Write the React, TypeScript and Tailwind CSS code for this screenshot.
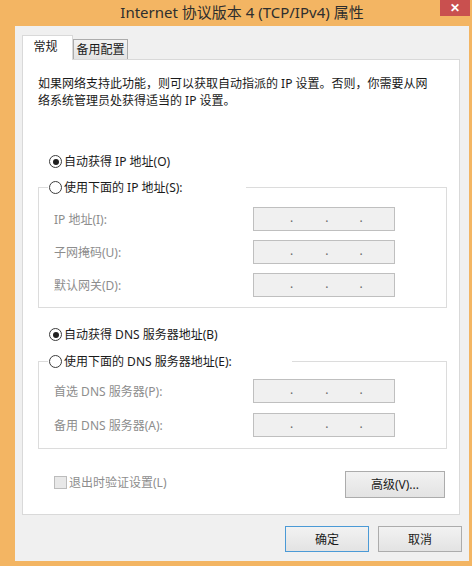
import React from "react";

const Radio = ({ checked }: { checked?: boolean }) => (
  <span className="w-[13px] h-[13px] rounded-full border border-[#3c3c3c] bg-white flex items-center justify-center shrink-0">
    {checked && <span className="w-[6px] h-[6px] rounded-full bg-[#1f1f1f]" />}
  </span>
);

const IpBox = () => (
  <div className="w-[142px] h-[24px] border border-[#bfbfbf] bg-[#f0f0f0] flex items-center text-[#6a6a6a] text-[12px] leading-none pb-[2px]">
    <span className="ml-[36px]">.</span>
    <span className="ml-[32px]">.</span>
    <span className="ml-[31px]">.</span>
  </div>
);

const Row = ({ label }: { label: string }) => (
  <div className="flex items-center">
    <div className="w-[214px] pl-[15px] text-[#8d8d8d]">{label}</div>
    <IpBox />
  </div>
);

const Btn = ({ children, def }: { children: React.ReactNode; def?: boolean }) => (
  <div
    className={
      "flex items-center justify-center bg-gradient-to-b from-[#f2f2f2] to-[#e3e3e3] border " +
      (def ? "border-[#4b9ad6]" : "border-[#acacac]")
    }
  >
    {children}
  </div>
);

export default function App() {
  return (
    <div className="w-[472px] h-[566px] bg-[#f3b563] flex flex-col pl-[15px] pr-[3px] pb-[5px] font-['Noto_Sans','Noto_Sans_CJK_SC',sans-serif] text-[12px] leading-[17px] text-[#1a1a1a]">
      <div className="h-[26px] relative flex items-center justify-center shrink-0">
        <span className="text-[15px] text-[#2e2e2e] pb-[2px]">Internet 协议版本 4 (TCP/IPv4) 属性</span>
        <div className="absolute right-[-1px] top-0 w-[30px] h-[16px] bg-[#c9504f] flex items-center justify-center text-white text-[12px] font-bold leading-none">
          ✕
        </div>
      </div>
      <div className="flex-1 bg-[#f0f0f0] flex flex-col pl-[7px] pt-[9px]">
        <div className="flex items-end h-[24px]">
          <div className="relative z-10 w-[51px] h-[25px] mb-[-1px] bg-white border border-b-0 border-[#d9d9d9] flex justify-center pt-[2px] pr-[4px]">
            常规
          </div>
          <div className="w-[55px] h-[20px] bg-gradient-to-b from-[#f2f2f2] to-[#e4e4e4] border border-b-0 border-[#acacac] flex justify-center items-center">
            备用配置
          </div>
        </div>
        <div className="w-[438px] h-[456px] bg-white border border-[#d9d9d9] pl-[15px] pt-[15px] flex flex-col">
          <p className="w-[400px]">
            如果网络支持此功能，则可以获取自动指派的 IP 设置。否则，你需要从网
            <br />
            络系统管理员处获得适当的 IP 设置。
          </p>
          <div className="mt-[44px] ml-[11px] flex items-center gap-[2px] h-[17px]">
            <Radio checked />
            <span>自动获得 IP 地址(O)</span>
          </div>
          <fieldset className="mt-[9px] w-[409px] border border-[#dcdcdc] px-0 pt-[11px] pb-[10px] flex flex-col gap-[9px]">
            <legend className="ml-[9px] pl-[1px] w-[198px] h-[17px] flex items-center gap-[2px] bg-white">
              <Radio />
              <span>使用下面的 IP 地址(S):</span>
            </legend>
            <Row label="IP 地址(I):" />
            <Row label="子网掩码(U):" />
            <Row label="默认网关(D):" />
          </fieldset>
          <div className="mt-[18px] ml-[11px] flex items-center gap-[2px] h-[17px]">
            <Radio checked />
            <span>自动获得 DNS 服务器地址(B)</span>
          </div>
          <fieldset className="mt-[10px] w-[409px] border border-[#dcdcdc] px-0 pt-[9px] pb-[11px] flex flex-col gap-[10px]">
            <legend className="ml-[9px] pl-[1px] w-[244px] h-[17px] flex items-center gap-[2px] bg-white">
              <Radio />
              <span>使用下面的 DNS 服务器地址(E):</span>
            </legend>
            <Row label="首选 DNS 服务器(P):" />
            <Row label="备用 DNS 服务器(A):" />
          </fieldset>
          <div className="mt-[22px] w-[409px] pl-[16px] pr-[2px] flex items-center justify-between">
            <div className="flex items-center gap-[2px] mb-[4px] text-[#8d8d8d]">
              <span className="w-[13px] h-[13px] border border-[#bcbcbc] bg-[#e8e8e8]" />
              <span>退出时验证设置(L)</span>
            </div>
            <div className="w-[100px] h-[27px] flex">
              <div className="flex-1 flex">
                <Btn>
                  <span className="w-[98px] text-center">高级(V)...</span>
                </Btn>
              </div>
            </div>
          </div>
        </div>
        <div className="mt-[11px] flex justify-end gap-[9px] pr-[7px]">
          <div className="w-[84px] h-[26px] flex">
            <Btn def>
              <span className="w-[82px] text-center">确定</span>
            </Btn>
          </div>
          <div className="w-[84px] h-[26px] flex">
            <Btn>
              <span className="w-[82px] text-center">取消</span>
            </Btn>
          </div>
        </div>
      </div>
    </div>
  );
}
